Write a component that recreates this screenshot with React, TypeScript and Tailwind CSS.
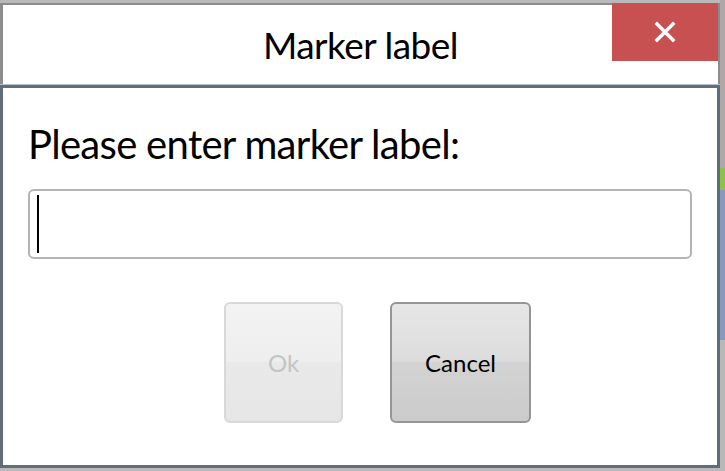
export default function App() {
  return (
    <div className="flex w-[725px] h-[471px] overflow-hidden bg-[#b9b9b9]" style={{ fontFamily: 'Lato, "Open Sans", sans-serif' }}>
      <div className="flex flex-col w-[720px] h-[465px] mt-[3px] shrink-0">
        <div className="relative h-[81px] shrink-0 bg-white border-t-2 border-l-[3px] border-r-2 border-[#8c8c8c] flex items-center justify-center">
          <span className="text-[37px] tracking-[-0.5px] text-black leading-none">Marker label</span>
          <div className="absolute right-0 -top-[2px] w-[106px] h-[58px] bg-[#c75050] flex items-center justify-center">
            <svg width="22" height="22" viewBox="0 0 22 22">
              <path d="M3 3 L19 19 M19 3 L3 19" stroke="white" strokeWidth="3.5" strokeLinecap="square" />
            </svg>
          </div>
        </div>
        <div className="h-px bg-[#b8c0c8] shrink-0" />
        <div className="flex-1 bg-white border-[3px] border-[#5f6e7a] flex flex-col px-[25px]">
          <div className="mt-[36px] text-[40px] tracking-[-0.7px] leading-none text-black">Please enter marker label:</div>
          <div className="mt-[25px] h-[70px] w-[664px] rounded-[6px] border-2 border-[#b4b4b4] bg-white flex items-center pl-[7px]">
            <div className="w-[2px] h-[58px] bg-black" />
          </div>
          <div className="mt-[43px] flex justify-center gap-[47px] pl-[35px]">
            <button className="w-[119px] h-[121px] rounded-[6px] border-2 border-[#d8d8d8] bg-[linear-gradient(#f3f3f3,#eeeeee_50%,#e9e9e9_50%,#e6e6e6)] text-[#c4c4c4] text-[24px]">Ok</button>
            <button className="w-[141px] h-[121px] rounded-[6px] border-2 border-[#959595] bg-[linear-gradient(#e6e6e6,#dcdcdc_50%,#d3d3d3_50%,#cbcbcb)] text-black text-[24px]">Cancel</button>
          </div>
        </div>
      </div>
      <div className="flex flex-col w-[5px] shrink-0">
        <div className="h-[168px] bg-[#b0a8a8]" />
        <div className="h-[22px] bg-[#8fc04a]" />
        <div className="h-[150px] bg-[#8a98c0]" />
        <div className="flex-1 bg-[#b8b8b8]" />
      </div>
    </div>
  );
}
